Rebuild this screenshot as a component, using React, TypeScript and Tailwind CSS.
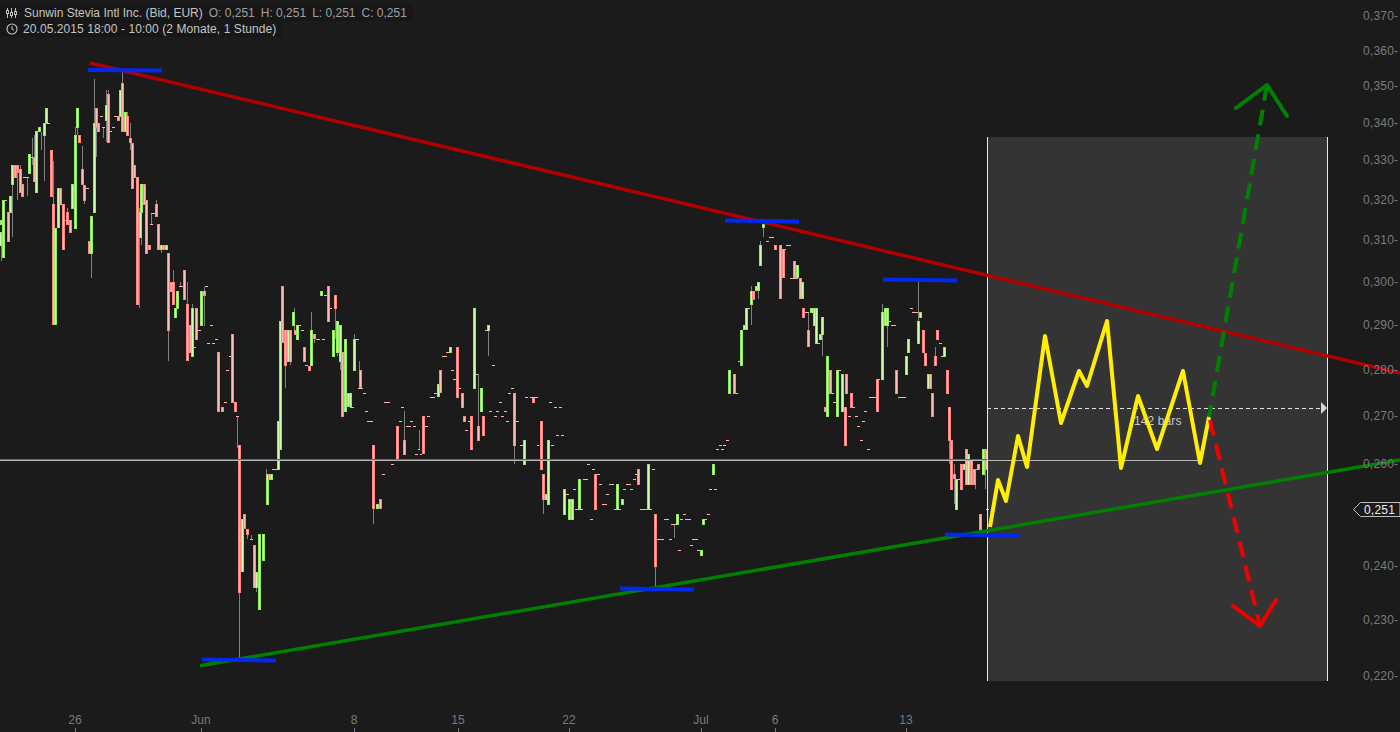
import React from 'react';

// [center x, top, bottom]
const red: number[][] = [
  [8.5,212,242],[15,165,178],[17.5,165,173],[20,169,193],[22.5,184,197],[34,157,182],[51.5,150,197],[53.5,204,325],[60.5,188,204],[63,204,250],
  [67.5,212,225],[70.5,220,233],[79,135,143],[82,169,185],[84,185,201],[89.5,241,254],[96.5,108,128],[98.5,123,132],[108,94,143],[118,116,121],
  [122.5,83,132],[127.5,116,136],[130.5,138,143],[132.5,143,189],[134.5,165,178],[137.5,177,305],[144.5,184,205],[146,200,254],[149,245,250],
  [156.5,204,217],[158.5,224,250],[163,245,250],[168.5,253,331],[171,282,292],[173.5,282,305],[184.5,270,300],[187.5,304,361],[190,325,353],
  [196.5,308,340],[204,291,296],[218.5,352,412],[222,407,412],[232.5,334,403],[235,402,412],[239,445,593],[244,514,529],[247,529,535],[254,545,588],
  [269,474,480],[282.5,286,343],[285,330,366],[290,330,362],[295.5,330,335],[304,347,362],[309.5,366,371],[314,334,339],[328,286,322],[335,295,309],
  [342.5,352,417],[360,370,388],[373.5,445,509],[380,499,509],[397,426,460],[404,440,455],[423.5,416,454],[440.5,370,393],[457.5,347,398],[462,393,408],
  [464.5,416,422],[471.5,416,450],[478.5,426,441],[483.5,416,436],[514.5,393,446],[533.5,398,403],[541.5,421,470],[543.5,474,500],[595,474,510],
  [638.5,469,485],[655.5,514,567],[734.5,374,394],[753.5,291,300],[775,245,250],[780,245,299],[783,249,278],[794.5,261,278],[800,278,299],[803.5,308,318],
  [808.5,330,347],[825,407,412],[830.5,370,394],[845,407,446],[846.5,374,394],[851.5,393,408],[877.5,379,412],[896.5,370,394],[923.5,330,353],
  [925.5,353,366],[930.5,374,389],[932.5,393,417],[935.5,356,366],[937.5,330,340],[947.5,370,394],[949.5,407,441],[951.5,440,490],[954,474,479],
  [961.5,464,490],[966.5,449,485],[971.5,459,485],[974,469,485],[978.5,464,470],[980.5,514,530],[986,449,470],
];

const green: number[][] = [
  [1,220,225],[0,232,246],[3.5,200,258],[10.5,196,213],[12.5,165,185],[29.5,154,174],[36.5,131,193],[39.5,127,132],[44,123,136],[46.5,108,123],
  [55.5,228,325],[58.5,188,228],[72.5,184,209],[75.5,135,229],[77,108,128],[91.5,216,254],[94.5,123,213],[106.5,105,121],[120.5,90,117],[125.5,112,132],
  [140,212,238],[141.5,184,213],[161,245,250],[166,245,250],[175,308,318],[177.5,291,309],[192.5,308,357],[201.5,291,326],[242,519,572],[256.5,572,588],
  [259,534,610],[263,534,561],[267,474,505],[271.5,474,480],[278,421,470],[280,321,450],[288,330,362],[293,312,326],[297.5,325,340],[311.5,330,366],
  [321.5,291,296],[333.5,330,357],[337.5,321,353],[340,325,362],[345.5,339,412],[348,393,407],[350,393,407],[354,339,371],[377,504,509],[438.5,384,397],
  [450.5,347,353],[474.5,308,389],[481.5,388,412],[488.5,325,331],[524.5,440,465],[546,494,500],[548.5,440,505],[564.5,489,515],[569.5,499,520],[572.5,499,520],
  [579.5,479,509],[617.5,484,510],[622.5,499,505],[648.5,464,510],[677.5,514,525],[701.5,550,556],[703.5,519,525],[713.5,464,475],[729.5,370,394],
  [741.5,330,366],[744.5,325,330],[746.5,308,330],[751.5,291,305],[756,286,291],[758.5,282,291],[760.5,245,266],[763.5,224,228],[797,265,278],[802,282,299],
  [811,308,313],[814,308,326],[816,308,344],[820,334,340],[822,317,335],[827.5,356,417],[837.5,370,417],[842.5,374,412],[882,312,380],[885,308,326],
  [887,308,326],[906.5,356,375],[908.5,339,353],[918.5,321,344],[920.5,312,318],[928.5,374,389],[944.5,347,357],[956,479,510],[964,464,470],[968.5,454,485],[983.5,449,475],
];

// later bars are painted over earlier ones
const candles = [
  ...red.map((c) => ({ c, color: 'red' as const })),
  ...green.map((c) => ({ c, color: 'green' as const })),
].sort((a, b) => a.c[0] - b.c[0]);

// [x, top, bottom]
const wicks: number[][] = [
  [1,246,261],[12,185,237],[17,173,200],[20,165,169],[27,177,196],[32,138,165],[34,135,157],[41,132,150],[44,136,181],[53,161,204],[67,208,212],[75,127,135],
  [77,127,135],[82,146,169],[84,201,204],[91,254,278],[94,79,123],[96,123,157],[103,127,138],[106,90,142],[108,90,94],[122,72,83],[127,112,135],[130,123,150],
  [139,208,308],[141,213,245],[151,213,224],[156,200,204],[161,250,253],[168,331,361],[173,270,282],[180,282,286],[187,282,304],[192,304,308],[204,287,326],
  [237,416,448],[239,593,660],[247,535,539],[251,535,539],[256,588,592],[266,469,474],[268,480,499],[281,286,321],[285,366,388],[290,362,365],[294,308,330],
  [311,312,330],[314,339,343],[335,309,339],[337,353,356],[340,362,370],[354,334,339],[359,361,370],[373,509,524],[404,411,440],[419,430,449],[478,374,426],
  [488,331,356],[514,446,464],[543,500,514],[655,567,587],[674,524,538],[751,286,325],[758,291,299],[760,241,245],[763,228,237],[808,312,330],[822,335,356],
  [882,304,312],[887,326,347],[918,282,321],[935,347,356],[949,440,464],[954,464,504],[975,485,489],[985,470,489],
];

// [x1, x2, y] flat bars
const flats: number[][] = [
  [4,7,200],[23,29,177],[30,35,157],[46,50,123],[60,63,204],[65,68,220],[86,89,188],[100,103,116],[102,105,127],[109,112,131],[112,115,127],[114,117,116],
  [150,153,224],[151,155,213],[179,183,286],[194,196,347],[198,201,330],[205,208,286],[207,210,343],[210,213,325],[212,215,343],[215,218,339],[224,227,402],
  [226,229,370],[229,231,356],[236,239,416],[250,253,539],[272,277,469],[297,301,325],[301,304,330],[305,308,365],[316,320,339],[322,325,339],[324,327,295],
  [330,332,308],[350,354,407],[356,359,339],[358,363,388],[363,366,393],[365,368,411],[367,373,421],[382,385,474],[384,390,402],[389,392,459],[391,394,464],
  [394,399,459],[399,402,421],[401,404,407],[406,411,426],[410,413,421],[413,416,426],[415,418,454],[418,420,449],[420,422,454],[425,428,426],[427,430,416],
  [430,435,397],[434,437,393],[442,447,356],[446,449,352],[451,454,370],[453,456,379],[459,461,388],[465,468,430],[468,470,421],[476,478,374],[485,487,330],
  [489,492,411],[492,495,365],[494,497,416],[496,499,411],[499,502,402],[501,504,416],[504,507,411],[506,509,421],[508,511,393],[511,514,388],[516,519,421],
  [518,521,459],[520,523,445],[525,528,397],[528,531,459],[530,538,397],[537,539,445],[549,552,402],[551,554,445],[554,557,407],[556,559,435],[559,562,407],
  [561,564,435],[566,569,494],[573,576,489],[575,583,509],[583,588,479],[587,590,464],[590,593,519],[592,595,469],[597,600,474],[599,602,484],[602,607,504],
  [606,609,494],[609,614,484],[614,621,509],[623,626,489],[626,631,484],[630,633,489],[633,636,479],[635,638,474],[640,652,509],[652,655,469],[657,664,539],
  [664,669,519],[669,672,539],[671,676,524],[678,681,550],[680,683,519],[683,686,514],[685,691,519],[690,693,545],[692,698,539],[697,700,550],[704,707,519],
  [707,710,514],[709,712,489],[714,717,489],[716,719,449],[719,722,445],[721,724,449],[723,726,445],[726,729,440],[736,738,393],[738,740,361],[748,750,308],
  [766,769,241],[769,774,237],[782,786,249],[786,791,245],[790,798,278],[805,809,312],[817,820,343],[829,834,393],[833,836,402],[838,841,370],[848,851,416],
  [853,855,407],[855,858,416],[857,860,426],[860,863,440],[862,865,421],[864,867,411],[867,870,449],[869,876,397],[877,880,379],[889,891,321],[891,896,325],
  [898,906,397],[910,913,308],[912,918,312],[939,942,343],[941,945,356],[956,960,479],[975,977,469],[986,989,509],
];

const blueBars = [
  [88, 70, 162, 70.5],
  [202, 659.5, 276, 660.5],
  [620, 588.5, 694, 589.5],
  [725, 220.5, 799, 221.5],
  [883, 279.5, 957, 280.5],
  [945, 534.5, 1019, 535.5],
];

const priceLabels: [string, number][] = [
  ['0,370', 16], ['0,360', 51], ['0,350', 86], ['0,340', 123], ['0,330', 160], ['0,320', 200], ['0,310', 240], ['0,300', 282],
  ['0,290', 325], ['0,280', 370], ['0,270', 416], ['0,260', 464], ['0,240', 566], ['0,230', 620], ['0,220', 676],
];

const dateLabels: [string, number][] = [
  ['26', 75], ['Jun', 201], ['8', 354], ['15', 458], ['22', 569], ['Jul', 701], ['6', 775], ['13', 906],
];

const yellowPath = '990,527 998,480 1006,501 1018,436 1027,467 1045,336 1061,423 1079,371 1087,386 1107,321 1121,468 1138,396 1157,449 1183,371 1200,463 1209,417';

function Candle({ c, color }: { c: number[]; color: 'red' | 'green' }) {
  const left = Math.round(c[0] - 1.5);
  const h = c[2] - c[1];
  return (
    <g>
      <rect x={left} y={c[1]} width={3} height={h} className={color === 'red' ? 'fill-[#ff8585]' : 'fill-[#93e85f]'} />
      <rect x={left + 1} y={c[1] + 1} width={1} height={Math.max(h - 2, 0)} className={color === 'red' ? 'fill-[#ffbcb4]' : 'fill-[#ccffaa]'} />
    </g>
  );
}

function ChartCanvas() {
  return (
    <svg className="absolute inset-0" width={1400} height={732} viewBox="0 0 1400 732">
      {/* forecast box */}
      <rect x={987} y={137} width={341} height={544} className="fill-[#343434]" />

      <g shapeRendering="crispEdges">
        {wicks.map((w, i) => (
          <rect key={i} x={w[0]} y={w[1]} width={1} height={w[2] - w[1]} className="fill-[#808080]" />
        ))}
        {flats.map((f, i) => (
          <rect key={i} x={f[0]} y={f[2]} width={f[1] - f[0]} height={1} className="fill-[#ffb4aa]" />
        ))}
        {candles.map((d, i) => <Candle key={i} c={d.c} color={d.color} />)}

        {/* last price line */}
        <rect x={0} y={459} width={987} height={1} className="fill-[#666666]" />
        <rect x={0} y={460} width={1200} height={1} className="fill-[#b8b8b8]" />

        <rect x={987} y={137} width={1} height={544} className="fill-[#e8e8e8]" />
        <rect x={1327} y={137} width={1} height={544} className="fill-[#e8e8e8]" />
      </g>

      <line x1={987} y1={408} x2={1321} y2={408} strokeWidth={1} strokeDasharray="4 3" className="stroke-[#e0e0e0]" shapeRendering="crispEdges" />
      <polygon points="1321,402 1327,408 1321,414" className="fill-[#d8d8d8]" />
      <text x={1134} y={425} className="fill-[#c8c8c8] font-['Liberation_Sans',sans-serif] text-[12px] tracking-[0.1px]">142 bars</text>

      {/* trend lines */}
      <line x1={90} y1={63} x2={1400} y2={373} strokeWidth={3.5} className="stroke-[#b00000]" />
      <line x1={200} y1={665.7} x2={1400} y2={460} strokeWidth={3.5} className="stroke-[#008000]" />

      {blueBars.map((b, i) => (
        <line key={i} x1={b[0]} y1={b[1]} x2={b[2]} y2={b[3]} strokeWidth={4} className="stroke-[#0028ee]" />
      ))}

      {/* up scenario */}
      <line x1={1267} y1={85} x2={1209} y2={417} strokeWidth={4} strokeDasharray="16 9" className="stroke-[#008000]" />
      <polyline points="1236,108 1267,85 1287,116" fill="none" strokeWidth={4} strokeLinecap="round" strokeLinejoin="round" className="stroke-[#008000]" />

      <polyline points={yellowPath} fill="none" strokeWidth={4} strokeLinejoin="round" className="stroke-[#ffee00]" />

      {/* down scenario */}
      <line x1={1210} y1={420} x2={1260} y2={626} strokeWidth={4} strokeDasharray="16 9" className="stroke-[#f00000]" />
      <polyline points="1233,606 1260,626 1276,600" fill="none" strokeWidth={4} strokeLinecap="round" strokeLinejoin="round" className="stroke-[#f00000]" />

      {/* price axis */}
      <g className="fill-[#7a7a7a] font-['Liberation_Sans',sans-serif] text-[12px] tracking-[0.2px]">
        {priceLabels.map(([label, y]) => (
          <text key={label} x={1363} y={y + 4}>{label}-</text>
        ))}
      </g>
      <polygon points="1353.5,509.5 1360.5,502.5 1400,502.5 1400,516.5 1360.5,516.5" className="fill-[#1c1b1b] stroke-[#bdbdbd]" />
      <text x={1364} y={514} className="fill-[#eeeeee] font-['Liberation_Sans',sans-serif] text-[12px] tracking-[0.2px]">0,251</text>

      {/* time axis */}
      <g className="fill-[#7a7a7a] font-['Liberation_Sans',sans-serif] text-[12px]">
        {dateLabels.map(([label, x]) => (
          <g key={label}>
            <text x={x} y={724} textAnchor="middle">{label}</text>
            <rect x={x} y={728} width={1} height={4} shapeRendering="crispEdges" className="fill-[#7a7a7a]" />
          </g>
        ))}
      </g>
    </svg>
  );
}

function BarsIcon() {
  return (
    <svg width={11} height={10} viewBox="0 0 11 10" className="shrink-0 stroke-[#c0c0c0]" fill="none" shapeRendering="crispEdges">
      <path d="M1.5 0v10M5.5 0v10M9.5 0v10" />
      <path d="M0.5 2.5h2v3h-2zM4.5 4.5h2v3h-2zM8.5 3.5h2v3h-2z" className="fill-[#1c1b1b]" />
    </svg>
  );
}

function ClockIcon() {
  return (
    <svg width={12} height={12} viewBox="0 0 12 12" className="shrink-0 stroke-[#c8c8c8]" fill="none">
      <circle cx={6} cy={6} r={5} strokeWidth={1.1} />
      <path d="M6 3v3.2l2 1.1" strokeWidth={1} />
    </svg>
  );
}

export default function App() {
  return (
    <div className="relative w-[1400px] h-[732px] overflow-hidden bg-[#1c1b1b] font-['Liberation_Sans',sans-serif] text-[12px] leading-4 text-[#c4c4c4]">
      <ChartCanvas />
      <div className="relative flex flex-col items-start pt-[5px]">
        <div className="flex items-center w-[413px] h-4 pl-[6px] bg-[#171717]">
          <BarsIcon />
          <span className="ml-[7px]">Sunwin Stevia Intl Inc. (Bid, EUR)</span>
          <span className="ml-[6px] text-[#a0a0a0]">O: 0,251</span>
          <span className="ml-[6px] text-[#a0a0a0]">H: 0,251</span>
          <span className="ml-[6px] text-[#a0a0a0]">L: 0,251</span>
          <span className="ml-[6px] text-[#a0a0a0]">C: 0,251</span>
        </div>
        <div className="flex items-center w-[282px] h-4 pl-[6px] bg-[#171717]">
          <ClockIcon />
          <span className="ml-[5px] tracking-[0.07px]">20.05.2015 18:00 - 10:00 (2 Monate, 1 Stunde)</span>
        </div>
      </div>
    </div>
  );
}
